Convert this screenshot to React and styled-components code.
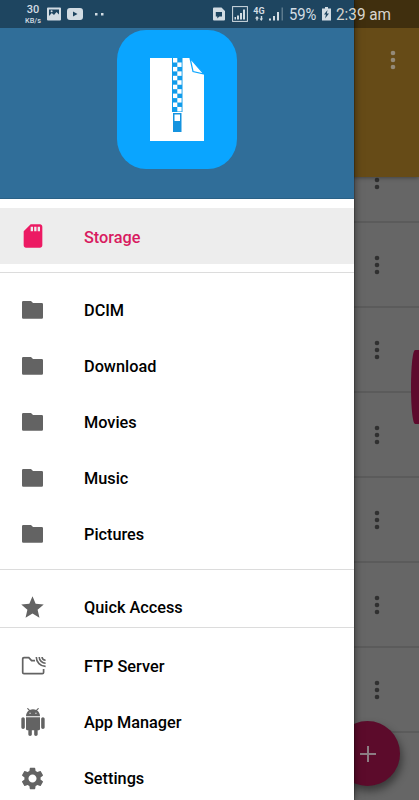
import React from 'react';
import styled, { createGlobalStyle } from 'styled-components';
import { MdSdCard, MdSettings, MdStar } from 'react-icons/md';

const GlobalStyle = createGlobalStyle`
  * {
    box-sizing: border-box;
  }

  body {
    margin: 0;
    font-family: Roboto, "Liberation Sans", sans-serif;
  }
`;

const Screen = styled.div`
  position: relative;
  width: 419px;
  height: 800px;
  overflow: hidden;
  background-color: #666666;
`;

const AppBar = styled.header`
  position: relative;
  z-index: 1;
  display: flex;
  justify-content: flex-end;
  height: 177px;
  padding: 50px 22px 0 0;
  background-color: #664b17;
  box-shadow: 0 1px 4px rgba(0, 0, 0, 0.35);
`;

const FileList = styled.div`
  height: 623px;
  overflow: hidden;
`;

const FileRow = styled.div`
  display: flex;
  justify-content: flex-end;
  align-items: center;
  height: 85px;
  padding-right: 38px;
  border-bottom: 2px solid #5b5b5b;

  &:first-child {
    margin-top: -39px;
  }

  &:last-child {
    border-bottom: none;
  }
`;

const Dots = styled.svg`
  width: 8px;
  height: 20px;
  fill: ${(props) => props.$color};
`;

const ScrollThumb = styled.div`
  position: absolute;
  top: 350px;
  right: 0;
  width: 8px;
  height: 74px;
  border-radius: 4px 0 0 4px / 37px 0 0 37px;
  background-color: #5e0a2d;
`;

const Fab = styled.div`
  position: absolute;
  top: 721px;
  left: 335px;
  display: flex;
  align-items: center;
  justify-content: center;
  width: 65px;
  height: 65px;
  border-radius: 50%;
  background-color: #5c0b2b;
  box-shadow: 2px 5px 9px rgba(0, 0, 0, 0.45);
`;

const Drawer = styled.nav`
  position: absolute;
  top: 0;
  left: 0;
  z-index: 2;
  width: 354px;
  height: 800px;
  overflow: hidden;
  background-color: #ffffff;
  box-shadow: 0 0 8px rgba(0, 0, 0, 0.55), 0 0 1px #000000;
`;

const DrawerHeader = styled.div`
  display: flex;
  justify-content: center;
  height: 199px;
  padding-top: 30px;
  margin-bottom: 9px;
  background-color: #306e99;
  border-bottom: 1px solid #2a6186;
`;

const Logo = styled.div`
  width: 120px;
  height: 139px;
  border-radius: 29px / 30px;
  background-color: #0aa5ff;
`;

const Group = styled.div`
  padding-top: ${(props) => props.$top || 0}px;
  padding-bottom: ${(props) => props.$bottom || 0}px;
  border-bottom: ${(props) => (props.$last ? 'none' : '1px solid #dcdcdc')};
`;

const Item = styled.div`
  display: flex;
  align-items: center;
  height: ${(props) => props.$height || 56}px;
  color: ${(props) => (props.$active ? '#d81b60' : '#000000')};
  background-color: ${(props) => (props.$active ? '#ededed' : 'transparent')};
`;

const ItemIcon = styled.span`
  display: flex;
  justify-content: center;
  width: 65px;
  color: ${(props) => (props.$active ? '#ec1a63' : '#636363')};
`;

const ItemLabel = styled.span`
  margin-left: 19px;
  padding-top: ${(props) => (props.$active ? 3 : 1)}px;
  font-size: 16.3px;
  font-weight: 500;
  line-height: 20px;
  white-space: nowrap;
`;

const StatusBar = styled.div`
  position: absolute;
  top: 0;
  left: 0;
  z-index: 3;
  display: flex;
  align-items: center;
  width: 419px;
  height: 28px;
  padding-left: 24px;
  color: #d2dce3;
  background-color: rgba(0, 0, 0, 0.37);

  svg {
    flex: none;
    fill: currentColor;
  }
`;

const Speed = styled.div`
  display: flex;
  flex-direction: column;
  align-items: center;
  width: 18px;
  margin-right: 5px;
  font-weight: 500;
`;

const SpeedValue = styled.span`
  font-size: 11px;
  line-height: 13px;
`;

const SpeedUnit = styled.span`
  font-size: 7.3px;
  line-height: 9px;
`;

const StatusIcon = styled.svg`
  width: ${(props) => props.$w}px;
  height: 16px;
  margin-right: ${(props) => props.$gap}px;
`;

const Network = styled.div`
  display: flex;
  flex-direction: column;
  align-items: center;
  width: 12px;
  margin-right: 4px;
  font-size: 9px;
  font-weight: 700;
  line-height: 9px;
`;

const StatusText = styled.span`
  flex: none;
  width: ${(props) => props.$w}px;
  margin-right: ${(props) => props.$gap || 0}px;
  color: ${(props) => props.$color || 'inherit'};
  font-size: 17px;
  line-height: 20px;
  white-space: nowrap;
  transform: scaleX(${(props) => props.$scale});
  transform-origin: left center;
`;

function MoreDots({ color }) {
  return (
    <Dots $color={color} viewBox="0 0 8 20">
      <circle cx="4" cy="3" r="2.3" />
      <circle cx="4" cy="10" r="2.3" />
      <circle cx="4" cy="17" r="2.3" />
    </Dots>
  );
}

function ZipLogo() {
  const teeth = Array.from({ length: 12 }, (_, i) => i);
  return (
    <svg width="120" height="139" viewBox="0 0 120 139">
      <path d="M33 28H73L87 44V111H33Z" fill="#fff" />
      <path d="M73 28L76 41.5L87 44Z" fill="#fff" stroke="#0aa5ff" strokeWidth="1.2" />
      <rect x="55" y="28" width="10.5" height="54" fill="#109ceb" />
      {teeth.map((i) => (
        <rect
          key={i}
          x={i % 2 ? 60.3 : 56}
          y={28 + i * 4.45}
          width="4.3"
          height="4.5"
          fill="#fff"
        />
      ))}
      <rect x="56" y="83" width="8.5" height="19" fill="#1593df" />
      <rect x="57.5" y="84.5" width="5.5" height="6.5" fill="#fff" />
    </svg>
  );
}

function FolderIcon() {
  return (
    <svg width="21" height="18" viewBox="0 0 21 18" fill="currentColor">
      <path d="M1.2 0H9L11 2H19.8Q21 2 21 3.2V16.5Q21 17.7 19.8 17.7H1.2Q0 17.7 0 16.5V1.2Q0 0 1.2 0Z" />
    </svg>
  );
}

function FtpIcon() {
  return (
    <svg width="26" height="22" viewBox="0 0 26 22" fill="none" stroke="#636363">
      <path
        d="M15 5.6H11.6L8.8 2.6H4Q2.7 2.6 2.7 3.9V17.4Q2.7 18.7 4 18.7H22.3Q23.6 18.7 23.6 17.4V14"
        strokeWidth="1.7"
      />
      <path d="M22 2A3.6 3.6 0 0 0 25.6 5.2M19.2 2A6.5 6.5 0 0 0 25.6 8.3M16.3 2A9.3 9.3 0 0 0 25.6 11.4" strokeWidth="1.6" />
    </svg>
  );
}

function AndroidIcon() {
  return (
    <svg width="28" height="28" viewBox="0 0 24 24" fill="currentColor">
      <path d="M6 18c0 .55.45 1 1 1h1v3.5c0 .83.67 1.5 1.5 1.5s1.5-.67 1.5-1.5V19h2v3.5c0 .83.67 1.5 1.5 1.5s1.5-.67 1.5-1.5V19h1c.55 0 1-.45 1-1V8H6v10zM3.5 8C2.67 8 2 8.67 2 9.5v7c0 .83.67 1.5 1.5 1.5S5 17.33 5 16.5v-7C5 8.67 4.33 8 3.5 8zm17 0c-.83 0-1.5.67-1.5 1.5v7c0 .83.67 1.5 1.5 1.5s1.5-.67 1.5-1.5v-7c0-.83-.67-1.5-1.5-1.5zm-4.97-5.84l1.3-1.3c.2-.2.2-.51 0-.71-.2-.2-.51-.2-.71 0l-1.48 1.48C13.85 1.23 12.95 1 12 1c-.96 0-1.86.23-2.66.63L7.85.15c-.2-.2-.51-.2-.71 0-.2.2-.2.51 0 .71l1.31 1.31C6.97 3.26 6 5.01 6 7h12c0-1.99-.97-3.75-2.47-4.84zM10 5H9V4h1v1zm5 0h-1V4h1v1z" />
    </svg>
  );
}

function DrawerItem({ icon, label, active, height }) {
  return (
    <Item $active={active} $height={height}>
      <ItemIcon $active={active}>{icon}</ItemIcon>
      <ItemLabel $active={active}>{label}</ItemLabel>
    </Item>
  );
}

function Status() {
  return (
    <StatusBar>
      <Speed>
        <SpeedValue>30</SpeedValue>
        <SpeedUnit>KB/s</SpeedUnit>
      </Speed>
      <StatusIcon $w={14} $gap={6} viewBox="0 0 14 16">
        <path
          fillRule="evenodd"
          d="M1 1.5H13Q14 1.5 14 2.5V13.5Q14 14.5 13 14.5H1Q0 14.5 0 13.5V2.5Q0 1.5 1 1.5ZM2 3.5V10L4.8 7L7 9L9.5 6L12 8.5V3.5Z"
        />
        <circle cx="4.6" cy="5.2" r="1" />
      </StatusIcon>
      <StatusIcon $w={16} $gap={11} viewBox="0 0 16 16">
        <path fillRule="evenodd" d="M3 2H13Q16 2 16 5V11Q16 14 13 14H3Q0 14 0 11V5Q0 2 3 2ZM6 5.5V10.5L10.5 8Z" />
      </StatusIcon>
      <StatusIcon $w={12} $gap={107} viewBox="0 0 12 16">
        <rect x="1" y="7" width="2.5" height="2.5" />
        <rect x="7" y="7" width="2.5" height="2.5" />
      </StatusIcon>
      <StatusIcon $w={12} $gap={7} viewBox="0 0 12 16">
        <path fillRule="evenodd" d="M1 1.5H8.5L12 5V13.5Q12 14.5 11 14.5H1Q0 14.5 0 13.5V2.5Q0 1.5 1 1.5ZM2.8 6V10.5H4.3V12.5L6.3 10.5H9V6Z" />
      </StatusIcon>
      <StatusIcon $w={16} $gap={5} viewBox="0 0 16 16">
        <rect x="0.6" y="0.6" width="14.8" height="14.8" fill="none" stroke="currentColor" />
        <path d="M2.5 11H4V13.5H2.5ZM5 9.5H7V13.5H5ZM8 7H10V13.5H8ZM11 3.5H13V13.5H11Z" />
      </StatusIcon>
      <Network>
        4G
        <svg width="8" height="5" viewBox="0 0 8 5">
          <path d="M0 2.5L2 0L4 2.5H2.7V4.5H1.3V2.5ZM4.5 2.5H5.8V0H7.2V2.5H8L6.3 5Z" />
        </svg>
      </Network>
      <StatusIcon $w={15} $gap={5} viewBox="0 0 15 16">
        <path d="M0 12.5H2V14.5H0ZM4 10H6V14.5H4ZM8 6H10V14.5H8Z" />
        <path d="M12.5 1.5H14V14.5H12.5Z" opacity="0.35" />
      </StatusIcon>
      <StatusText $w={28} $gap={5} $scale={0.87}>59%</StatusText>
      <StatusIcon $w={9} $gap={5} viewBox="0 0 9 16">
        <path fillRule="evenodd" d="M3 1H6V2.5H9V14.5H0V2.5H3ZM5.5 4L2 8.5H4L3 12.5L7 7.5H4.8Z" />
      </StatusIcon>
      <StatusText $w={60} $color="#d8d5ce" $scale={0.9}>2:39 am</StatusText>
    </StatusBar>
  );
}

const folders = ['DCIM', 'Download', 'Movies', 'Music', 'Pictures'];

function App() {
  return (
    <>
      <GlobalStyle />
      <Screen>
        <AppBar>
          <MoreDots color="#948a78" />
        </AppBar>
        <FileList>
          {[1, 2, 3, 4, 5, 6, 7, 8].map((n) => (
            <FileRow key={n}>{n < 8 && <MoreDots color="#303030" />}</FileRow>
          ))}
        </FileList>
        <ScrollThumb />
        <Fab>
          <svg width="18" height="18" viewBox="0 0 18 18">
            <path d="M9 1V17M1 9H17" stroke="#8c7d83" strokeWidth="2" />
          </svg>
        </Fab>
        <Drawer>
          <DrawerHeader>
            <Logo>
              <ZipLogo />
            </Logo>
          </DrawerHeader>
          <Group $bottom={8}>
            <DrawerItem active icon={<MdSdCard size={28} />} label="Storage" />
          </Group>
          <Group $top={9} $bottom={7}>
            {folders.map((name) => (
              <DrawerItem key={name} icon={<FolderIcon />} label={name} />
            ))}
          </Group>
          <Group $top={17}>
            <DrawerItem height={40} icon={<MdStar size={27} />} label="Quick Access" />
          </Group>
          <Group $last $top={10}>
            <DrawerItem icon={<FtpIcon />} label="FTP Server" />
            <DrawerItem icon={<AndroidIcon />} label="App Manager" />
            <DrawerItem icon={<MdSettings size={27} />} label="Settings" />
          </Group>
        </Drawer>
        <Status />
      </Screen>
    </>
  );
}

export default App;
